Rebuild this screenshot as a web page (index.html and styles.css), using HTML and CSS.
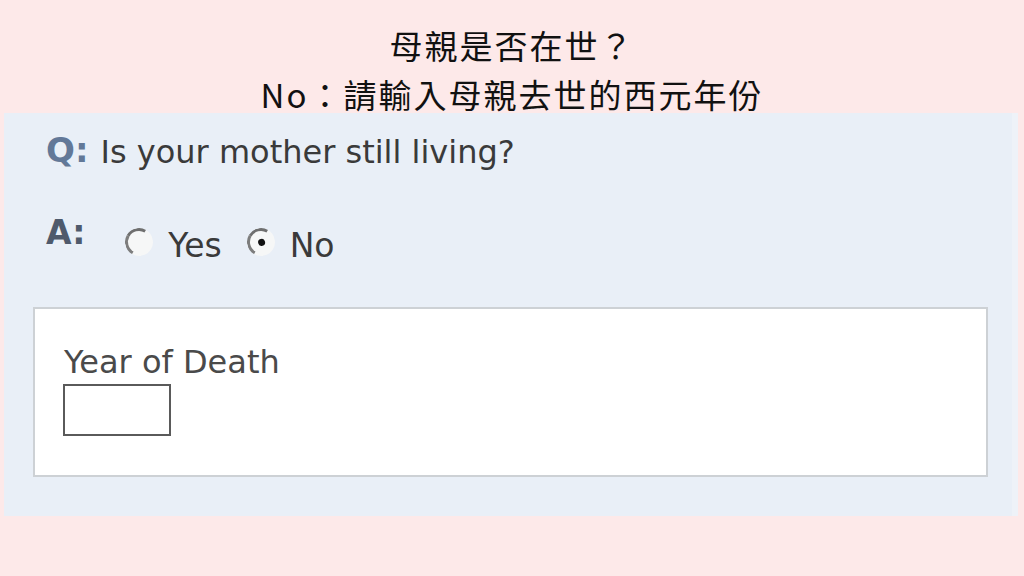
FILE: index.html
```html
<!DOCTYPE html>
<html lang="zh-Hant">
<head>
    <meta charset="UTF-8">
    <meta name="viewport" content="width=device-width, initial-scale=1.0">
    <title>母親是否在世？</title>
    <link rel="stylesheet" href="styles.css">
</head>
<body>

    <header class="caption">
        <p>母親是否在世？</p>
        <p>No：請輸入母親去世的西元年份</p>
    </header>

    <div class="panel">
        <div class="panel-inner">
            <div class="qa-row question">
                <span class="tag">Q:</span>
                <span class="q-text">Is your mother still living?</span>
            </div>

            <div class="qa-row answer">
                <span class="tag">A:</span>
                <label class="choice">
                    <span class="radio"></span>
                    <span>Yes</span>
                </label>
                <label class="choice">
                    <span class="radio checked"></span>
                    <span>No</span>
                </label>
            </div>

            <div class="death-box">
                <label for="death-year" class="field-label">Year of Death</label>
                <input type="text" id="death-year" class="year-input">
            </div>
        </div>
    </div>

</body>
</html>
```

FILE: styles.css
```css
body {
    margin: 0;
    background-color: #fde9e9;
    font-family: 'DejaVu Sans', 'Noto Sans', sans-serif;
    width: 1024px;
    height: 576px;
    overflow: hidden;
}
.caption {
    height: 113px;
    box-sizing: border-box;
    padding-top: 21px;
    text-align: center;
    font-family: 'Noto Sans CJK TC', 'Noto Sans', sans-serif;
    font-size: 33px;
    color: #111;
}
.caption p {
    margin: 0;
    line-height: 49px;
    letter-spacing: 2px;
}
.panel {
    margin-left: 4px;
    width: 1014px;
    height: 403px;
    background-color: #eef2f8;
}
.panel-inner {
    width: 1008px;
    height: 403px;
    box-sizing: border-box;
    padding: 17px 0 0 29px;
    background-color: #e9eff7;
}
.qa-row {
    display: flex;
    align-items: center;
    height: 40px;
    line-height: 40px;
    color: #3a3a3a;
}
.tag {
    font-family: 'DejaVu Sans', sans-serif;
    font-weight: bold;
    font-size: 33px;
    color: #4f5a6c;
    margin-left: 13px;
}
.question .tag {
    color: #627898;
    font-size: 34px;
}
.q-text {
    font-size: 32px;
    margin-left: 12px;
    padding-top: 4px;
}
.answer {
    margin-top: 52px;
}
.answer .tag {
    padding-bottom: 18px;
}
.choice {
    display: flex;
    align-items: center;
    font-size: 33px;
    margin-left: 40px;
    padding-top: 8px;
}
.choice + .choice {
    margin-left: 25px;
}
.radio {
    width: 28px;
    height: 28px;
    border-radius: 50%;
    border: 3px solid transparent;
    border-top-color: #6f6f6f;
    border-left-color: #7d7d7d;
    background-color: #f6f7f7;
    margin-right: 15px;
    position: relative;
    top: -4px;
    box-sizing: border-box;
    transform: rotate(-15deg);
}
.radio.checked::after {
    content: "";
    position: absolute;
    left: 8px;
    top: 8px;
    width: 7px;
    height: 7px;
    border-radius: 50%;
    background-color: #111;
}
.death-box {
    width: 955px;
    height: 170px;
    margin-top: 45px;
    box-sizing: border-box;
    background-color: #fff;
    border: 2px solid #cdd1d5;
    padding: 35px 0 0 29px;
}
.field-label {
    display: block;
    font-size: 32px;
    color: #4a4a4a;
    line-height: 36px;
}
.year-input {
    display: block;
    margin-top: 4px;
    margin-left: -1px;
    width: 108px;
    height: 52px;
    box-sizing: border-box;
    border: 2px solid #5a5a5a;
    background-color: #fff;
    padding: 0;
}
```
